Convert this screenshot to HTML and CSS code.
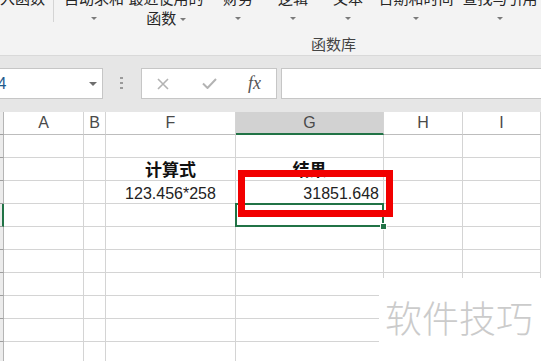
FILE: index.html
```html
<!DOCTYPE html>
<html lang="zh-CN">
<head>
  <meta charset="UTF-8" />
  <title>函数库</title>
  <link rel="stylesheet" href="styles.css">
</head>
<body>
  <div class="ribbon">
    <div class="ribbon-row">
      <div class="rbtn rbtn-insert">入函数</div>
      <div class="rsep"></div>
      <div class="rbtn w80"><span>自动求和</span><i class="caret"></i></div>
      <div class="rbtn w64"><span>最近使用的</span><span>函数 <i class="caret"></i></span></div>
      <div class="rbtn w80"><span>财务</span><i class="caret"></i></div>
      <div class="rbtn w30"><span>逻辑</span><i class="caret"></i></div>
      <div class="rbtn w80"><span>文本</span><i class="caret"></i></div>
      <div class="rbtn w56"><span>日期和时间</span><i class="caret"></i></div>
      <div class="rbtn w112"><span>查找与引用</span><i class="caret"></i></div>
    </div>
    <div class="group-label">函数库</div>
  </div>

  <div class="fbar">
    <div class="namebox">G4<i class="nb-caret"></i></div>
    <div class="dots"><i></i><i></i><i></i></div>
    <div class="fxbox">
      <svg class="ico-x" width="12" height="12" viewBox="0 0 12 12"><path d="M1 1L11 11M11 1L1 11" stroke="#b3b3b3" stroke-width="1.6" fill="none"/></svg>
      <svg class="ico-ok" width="15" height="11" viewBox="0 0 15 11"><path d="M1 5.5L5.5 10L14 1" stroke="#b3b3b3" stroke-width="2" fill="none"/></svg>
      <span class="fx">fx</span>
    </div>
    <div class="finput"></div>
  </div>

  <div class="sheet">
    <div class="grid">
      <div class="rh rh-top"></div>
      <div class="ch">A</div><div class="ch">B</div><div class="ch">F</div><div class="ch ch-sel">G</div><div class="ch">H</div><div class="ch">I</div>

      <div class="rh"></div><div class="c"></div><div class="c"></div><div class="c"></div><div class="c"></div><div class="c"></div><div class="c"></div>
      <div class="rh"></div><div class="c"></div><div class="c"></div><div class="c c-title">计算式</div><div class="c c-title">结果</div><div class="c"></div><div class="c"></div>
      <div class="rh"></div><div class="c"></div><div class="c"></div><div class="c c-mid">123.456*258</div><div class="c c-num">31851.648</div><div class="c"></div><div class="c"></div>
      <div class="rh rh-sel"></div><div class="c"></div><div class="c"></div><div class="c"></div><div class="c"></div><div class="c"></div><div class="c"></div>
      <div class="rh"></div><div class="c"></div><div class="c"></div><div class="c"></div><div class="c"></div><div class="c"></div><div class="c"></div>
      <div class="rh"></div><div class="c"></div><div class="c"></div><div class="c"></div><div class="c"></div><div class="c"></div><div class="c"></div>
      <div class="rh"></div><div class="c"></div><div class="c"></div><div class="c"></div><div class="c"></div><div class="c"></div><div class="c"></div>
      <div class="rh"></div><div class="c"></div><div class="c"></div><div class="c"></div><div class="c"></div><div class="c"></div><div class="c"></div>
      <div class="rh"></div><div class="c"></div><div class="c"></div><div class="c"></div><div class="c"></div><div class="c"></div><div class="c"></div>
      <div class="rh"></div><div class="c"></div><div class="c"></div><div class="c"></div><div class="c"></div><div class="c"></div><div class="c"></div>
    </div>
    <div class="sel-cell"><i class="handle"></i></div>
    <div class="mark"></div>
  </div>

  <div class="watermark">软件技巧</div>
</body>
</html>
```

FILE: styles.css
```css
body {
  margin: 0;
  width: 541px;
  height: 361px;
  overflow: hidden;
  position: relative;
  background: #fff;
  font-family: "Noto Sans CJK SC", "Liberation Sans", sans-serif;
  color: #262626;
}
.ribbon {
  height: 55px;
  background: #f3f3f3;
  border-bottom: 1px solid #d9d9d9;
  font-size: 15px;
  overflow: hidden;
}
.ribbon-row {
  display: flex;
  margin-top: -12px;
  height: 40px;
}
.rbtn {
  display: flex;
  flex-direction: column;
  align-items: center;
  line-height: 20px;
  white-space: nowrap;
  flex: none;
}
.rbtn-insert {
  width: 53px;
  align-items: flex-start;
}
.w30 { width: 30px; }
.w56 { width: 56px; }
.w64 { width: 64px; }
.w80 { width: 80px; }
.w112 { width: 112px; }
.rsep {
  width: 1px;
  height: 34px;
  background: #d4d4d4;
  flex: none;
}
.caret {
  display: inline-block;
  width: 0;
  height: 0;
  border-left: 3px solid transparent;
  border-right: 3px solid transparent;
  border-top: 3px solid #7a7a7a;
  margin-top: 9px;
}
.rbtn span .caret {
  vertical-align: middle;
  margin-top: 0;
}
.group-label {
  margin-top: 6px;
  margin-left: 311px;
  line-height: 20px;
  color: #444;
}

.fbar {
  display: flex;
  align-items: flex-start;
  height: 56px;
  padding-top: 12px;
  box-sizing: border-box;
  background: #e6e6e6;
}
.namebox {
  position: relative;
  margin-left: -20px;
  width: 123px;
  height: 31px;
  box-sizing: border-box;
  background: #fff;
  border: 1px solid #c6c6c6;
  padding-left: 4px;
  font: 16px/29px "Liberation Sans", sans-serif;
  color: #1e5a8c;
}
.nb-caret {
  position: absolute;
  left: 108px;
  top: 13px;
  border-left: 4px solid transparent;
  border-right: 4px solid transparent;
  border-top: 4px solid #6e6e6e;
}
.dots {
  display: flex;
  flex-direction: column;
  gap: 3px;
  margin: 9px 0 0 17px;
  width: 21px;
}
.dots i {
  width: 3px;
  height: 2px;
  background: #9a9a9a;
}
.fxbox {
  display: flex;
  align-items: center;
  width: 136px;
  height: 31px;
  box-sizing: border-box;
  background: #fff;
  border: 1px solid #c6c6c6;
}
.ico-x { margin-left: 15px; }
.ico-ok { margin-left: 33px; }
.fx {
  margin-left: 31px;
  font: italic 18px "Liberation Serif", serif;
  color: #555;
}
.finput {
  margin-left: 4px;
  flex: 1;
  height: 31px;
  margin-right: -5px;
  box-sizing: border-box;
  background: #fff;
  border: 1px solid #c6c6c6;
}

.sheet {
  position: relative;
}
.grid {
  display: grid;
  grid-template-columns: 4px 80px 22px 130px 148px 79px 1fr;
  grid-auto-rows: 23px;
}
.grid > div {
  box-sizing: border-box;
  border-right: 1px solid #d4d4d4;
  border-bottom: 1px solid #d4d4d4;
}
.rh {
  background: #ececec;
}
.grid > .rh {
  border-right-color: #b5b5b5;
  border-bottom-color: #9f9f9f;
}
.grid > .rh-sel {
  border-right: 2px solid #217346;
}
.ch {
  font: 16px/22px "Liberation Sans", sans-serif;
  color: #4a4a4a;
  text-align: center;
}
.grid > .ch {
  border-bottom-color: #bdbdbd;
}
.grid > .ch-sel {
  background: #d2d2d2;
  border-bottom: 2px solid #217346;
  line-height: 21px;
}
.c {
  font: 16px/22px "Liberation Sans", "Noto Sans CJK SC", sans-serif;
  padding-top: 2px;
  white-space: nowrap;
  color: #222;
}
.c-title {
  text-align: center;
  font-weight: bold;
  font-size: 17px;
  color: #111;
}
.c-mid { text-align: center; }
.c-num {
  text-align: right;
  padding-right: 4px;
}
.sel-cell {
  position: absolute;
  left: 235px;
  top: 91px;
  width: 149px;
  height: 24px;
  box-sizing: border-box;
  border: 2px solid #217346;
}
.handle {
  position: absolute;
  right: -5px;
  bottom: -5px;
  width: 5px;
  height: 5px;
  background: #217346;
  border: 1px solid #fff;
}
.mark {
  position: absolute;
  left: 238px;
  top: 58px;
  width: 155px;
  height: 47px;
  box-sizing: border-box;
  border: 7px solid #f20000;
}
.watermark {
  position: absolute;
  left: 379px;
  top: 278px;
  right: 0;
  bottom: 0;
  background: #fff;
  padding: 21px 0 0 6px;
  font-size: 37px;
  line-height: 37px;
  font-weight: 300;
  color: #cbcbcb;
  white-space: nowrap;
}
```
